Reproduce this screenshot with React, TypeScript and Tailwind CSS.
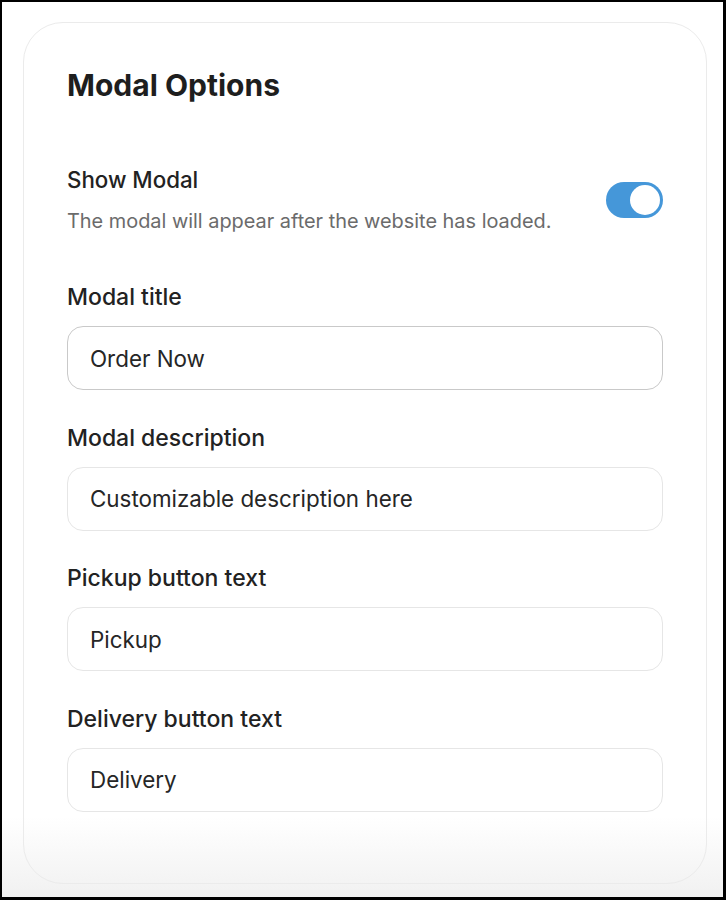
import { useState } from 'react'

const FIELDS = [
  { id: 'modal-title', label: 'Modal title', value: 'Order Now', strong: true },
  { id: 'modal-description', label: 'Modal description', value: 'Customizable description here', strong: false },
  { id: 'pickup-text', label: 'Pickup button text', value: 'Pickup', strong: false },
  { id: 'delivery-text', label: 'Delivery button text', value: 'Delivery', strong: false },
] as const

function Toggle({ checked, onChange }: { checked: boolean; onChange: (v: boolean) => void }) {
  return (
    <button
      type="button"
      role="switch"
      aria-checked={checked}
      onClick={() => onChange(!checked)}
      className={`flex h-[36px] w-[57px] shrink-0 items-center rounded-full p-[3px] ${checked ? 'justify-end bg-[#4597d9]' : 'justify-start bg-[#d4d4d4]'}`}
    >
      <span className="block h-[30px] w-[30px] rounded-full bg-white" />
    </button>
  )
}

export default function App() {
  const [show, setShow] = useState(true)
  const [values, setValues] = useState<Record<string, string>>(
    Object.fromEntries(FIELDS.map((f) => [f.id, f.value])),
  )

  return (
    <div
      className="box-border h-[900px] w-[726px] border-t-2 border-r-[3px] border-b-[3px] border-l-2 border-black bg-[linear-gradient(to_bottom,#ffffff_0%,#ffffff_91%,#f1f1f1_100%)] pl-[21px] pt-[20px] text-[#222222]"
      style={{ fontFamily: 'Inter, "Noto Sans", sans-serif' }}
    >
      <div className="box-border flex h-[862px] w-[684px] flex-col rounded-[40px] border border-[#ebebeb] px-[43px] pt-[44px]">
        <h1 className="text-[30px] font-bold leading-[36px] text-[#1e1e1e]">Modal Options</h1>

        <div className="mt-[63px] flex items-center justify-between">
          <div>
            <div className="text-[22.3px] font-medium leading-[28px]">Show Modal</div>
            <p className="mt-[14px] text-[19.9px] leading-[26px] text-[#6b6b6b]">
              The modal will appear after the website has loaded.
            </p>
          </div>
          <Toggle checked={show} onChange={setShow} />
        </div>

        <div className="mt-[49px] flex flex-col gap-[33.5px]">
          {FIELDS.map((f) => (
            <div key={f.id} className="flex flex-col">
              <label htmlFor={f.id} className="text-[23px] font-medium leading-[28px]">
                {f.label}
              </label>
              <input
                id={f.id}
                value={values[f.id]}
                onChange={(e) => setValues((v) => ({ ...v, [f.id]: e.target.value }))}
                className={`mt-[15px] box-border h-[64px] w-full rounded-[16px] border bg-white pl-[22px] text-[22.4px] text-[#262626] outline-none ${f.strong ? 'border-[#c9c9c9]' : 'border-[#e6e6e6]'}`}
              />
            </div>
          ))}
        </div>
      </div>
    </div>
  )
}
